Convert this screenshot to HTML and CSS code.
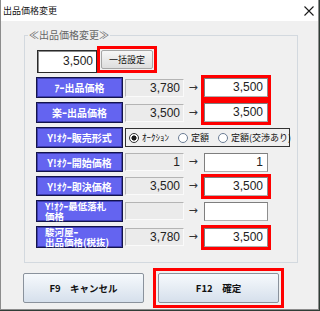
FILE: index.html
```html
<!DOCTYPE html>
<html lang="ja">
<head>
<meta charset="utf-8">
<title>出品価格変更</title>
<link rel="stylesheet" href="styles.css">
</head>
<body>
<div class="window">
  <div class="titlebar">
    <span class="title">出品価格変更</span>
    <svg class="close" width="10" height="10" viewBox="0 0 10 10"><path d="M0.5 0.5L9.5 9.5M9.5 0.5L0.5 9.5" stroke="#1a1a1a" stroke-width="1.1" fill="none"/></svg>
  </div>
  <div class="content">
    <fieldset class="group">
      <legend>≪出品価格変更≫</legend>
      <div class="inner">
        <div class="bulk">
          <div class="bulk-input">3,500</div>
          <span class="frame"><button class="bulk-btn">一括設定</button></span>
        </div>
        <div class="rows">
          <div class="label">ｱｰ出品価格</div>
          <div class="cur">3,780</div>
          <div class="arrow">→</div>
          <div class="new hl">3,500</div>
          <div class="spacer"></div>

          <div class="label">楽ｰ出品価格</div>
          <div class="cur">3,500</div>
          <div class="arrow">→</div>
          <div class="new hl">3,500</div>
          <div class="spacer"></div>

          <div class="label">Y!ｵｸｰ販売形式</div>
          <div class="radios">
            <span class="radio"><span class="dot on"></span>ｵｰｸｼｮﾝ</span>
            <span class="radio"><span class="dot"></span>定額</span>
            <span class="radio"><span class="dot"></span>定額(交渉あり)</span>
          </div>

          <div class="label">Y!ｵｸｰ開始価格</div>
          <div class="cur">1</div>
          <div class="arrow">→</div>
          <div class="new">1</div>
          <div class="spacer"></div>

          <div class="label">Y!ｵｸｰ即決価格</div>
          <div class="cur">3,500</div>
          <div class="arrow">→</div>
          <div class="new hl">3,500</div>
          <div class="spacer"></div>

          <div class="label two"><span>Y!ｵｸｰ最低落札</span><span>価格</span></div>
          <div class="cur"></div>
          <div class="arrow">→</div>
          <div class="new"></div>
          <div class="spacer"></div>

          <div class="label two"><span>駿河屋ｰ</span><span>出品価格(税抜)</span></div>
          <div class="cur">3,780</div>
          <div class="arrow">→</div>
          <div class="new hl">3,500</div>
          <div class="spacer"></div>
        </div>
      </div>
    </fieldset>
    <div class="buttons">
      <button class="btn">F9　キャンセル</button>
      <span class="frame wide"><button class="btn">F12　確定</button></span>
    </div>
  </div>
</div>
</body>
</html>
```

FILE: styles.css
```css
* { box-sizing: border-box; }
html { background: #2f3d36; }
body {
  margin: 0;
  font-family: "Noto Sans CJK JP", sans-serif;
  color: #000;
}
.window {
  width: 319px;
  height: 310px;
  background: #f0f0f0;
  border: 1px solid #8c8c8c;
  border-top: none;
}
.titlebar {
  height: 21px;
  background: #fff;
  display: flex;
  align-items: center;
  justify-content: space-between;
  padding: 0 4px 0 2px;
}
.title {
  font-size: 9px;
  line-height: 12px;
  color: #111;
}
.content {
  padding: 7px 0 0 22px;
}
.group {
  margin: 0 0 0 1px;
  width: 274px;
  padding: 8px 0 14px 3px;
  border: 1px solid #d3d9df;
  min-width: 0;
}
.group legend {
  padding: 0 1px;
  font-size: 10px;
  line-height: 14px;
  color: #666;
}
.inner {
  margin-left: 8px;
}
.bulk {
  display: flex;
  align-items: flex-start;
  gap: 4px;
  margin-left: 1px;
  height: 23px;
}
.bulk-input {
  width: 60px;
  height: 23px;
  background: #fff;
  border: 1px solid #2a2a2a;
  box-shadow: inset 1px 1px 0 #8a8a8a;
  font-family: "Liberation Sans", sans-serif;
  font-size: 12px;
  line-height: 21px;
  text-align: right;
  padding-right: 3px;
  color: #222;
}
.frame {
  display: flex;
  padding: 1px;
  margin: -1px;
  box-shadow: 0 0 0 3px #ff0000;
}
.frame.wide {
  padding: 2px;
  margin: -2px;
}
.bulk-btn {
  width: 52px;
  height: 19px;
  margin: 0;
  padding: 0;
  font-family: "Noto Sans CJK JP", sans-serif;
  font-size: 9px;
  line-height: 17px;
  color: #111;
  background: linear-gradient(#f7f7f7, #dddddd);
  border: 1px solid #a6a6a6;
  border-radius: 2px;
}
.hl {
  box-shadow: 0 0 0 3px #ff0000;
}
.rows {
  margin-top: 4px;
  display: grid;
  grid-template-columns: 87px 61px 20px 64px 22px;
  grid-template-rows: 21px 21px 21px 20px 20px 22px 22px;
  row-gap: 4px;
  align-items: center;
}
.label {
  height: 100%;
  background: #6464f0;
  border: 1px solid #14144a;
  box-shadow: inset 0 0 0 1px #3c3cb0;
  color: #fff;
  font-weight: bold;
  font-size: 10px;
  line-height: 19px;
  text-align: center;
  white-space: nowrap;
}
.label.two {
  display: flex;
  flex-direction: column;
  justify-content: center;
  text-align: left;
  padding-left: 8px;
  font-size: 9.5px;
  line-height: 10px;
}
.cur {
  margin-left: 2px;
  height: 18px;
  background: #ebebeb;
  border: 1px solid #b4b4b4;
  border-right-color: #fafafa;
  border-bottom-color: #fafafa;
  font-family: "Liberation Sans", sans-serif;
  font-size: 12px;
  line-height: 16px;
  text-align: right;
  padding-right: 3px;
  color: #222;
}
.arrow {
  font-family: "DejaVu Sans", sans-serif;
  font-size: 11px;
  line-height: 18px;
  text-align: center;
  color: #333;
  padding-right: 2px;
}
.new {
  height: 19px;
  background: #fff;
  border: 1px solid #7e7e7e;
  border-right-color: #8e8e8e;
  border-bottom-color: #b0b0b0;
  font-family: "Liberation Sans", sans-serif;
  font-size: 12px;
  line-height: 17px;
  text-align: right;
  padding-right: 4px;
  color: #222;
}
.radios {
  grid-column: 2 / 6;
  margin-left: 2px;
  height: 19px;
  border: 1px solid #333;
  background: #f0f0f0;
  display: flex;
  align-items: center;
  gap: 9px;
  padding-left: 3px;
  font-size: 9px;
  color: #111;
  white-space: nowrap;
}
.radio {
  display: flex;
  align-items: center;
  gap: 3px;
}
.dot {
  width: 10px;
  height: 10px;
  border-radius: 50%;
  border: 1px solid #6b7d95;
  background: #fff;
}
.dot.on {
  border-color: #333;
  background: radial-gradient(circle, #1a1a1a 0 2.3px, #fff 2.8px);
}
.buttons {
  margin-top: 10px;
  display: flex;
  gap: 14px;
}
.btn {
  width: 121px;
  height: 30px;
  margin: 0;
  padding: 0;
  font-family: "Noto Sans CJK JP", sans-serif;
  font-size: 9.5px;
  font-weight: bold;
  color: #111;
  background: linear-gradient(#f6f9fc, #d6e0ec);
  border: 1px solid #8a929c;
  border-radius: 2px;
}
```
